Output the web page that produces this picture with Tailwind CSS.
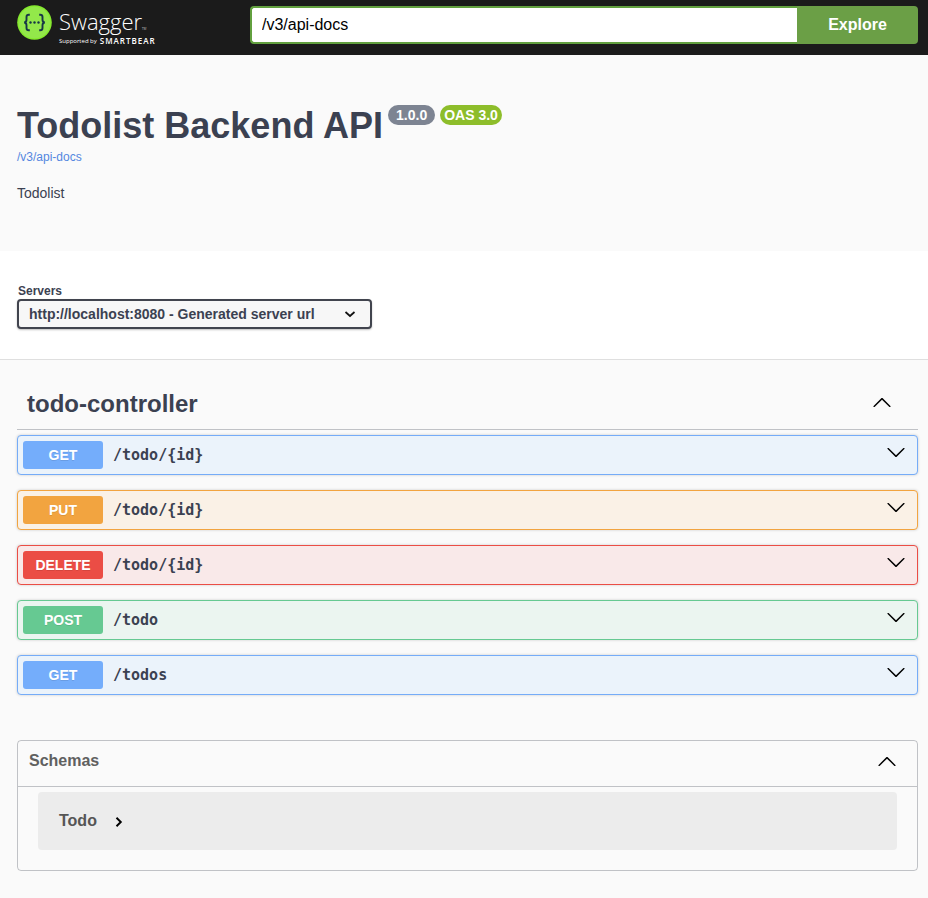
<!DOCTYPE html>
<html lang="en">
<head>
<meta charset="utf-8">
<meta name="viewport" content="width=device-width, initial-scale=1">
<title>Swagger UI</title>
<script src="https://cdn.jsdelivr.net/npm/@tailwindcss/browser@4"></script>
</head>
<body class="min-h-screen bg-[#fafafa] font-['Liberation_Sans',Arial,sans-serif] text-[#3b4151]">
<svg class="hidden" aria-hidden="true">
  <symbol id="chevron" viewBox="0 0 20 20"><path d="M17.418 6.109c.272-.268.709-.268.979 0s.271.701 0 .969l-7.908 7.830c-.27.268-.707.268-.979 0l-7.908-7.830c-.27-.268-.27-.701 0-.969.271-.268.709-.268.979 0L10 13.250z"/></symbol>
</svg>

<header class="flex h-[55px] items-start bg-[#1b1b1b] pt-[6px] pr-[10px] pl-[17px]">
  <a href="#" aria-label="Swagger, supported by SMARTBEAR" class="-mt-px flex w-[233px] shrink-0 gap-[7px] font-['Open_Sans',sans-serif] text-white">
    <svg class="h-[35px] w-[35px]" viewBox="0 0 35 35" aria-hidden="true">
      <circle cx="17.500" cy="17.500" r="17.300" fill="#85ea2d"/>
      <circle cx="17.500" cy="17.500" r="15.800" fill="#93e84a"/>
      <g fill="none" stroke="#173647" stroke-width="1.900">
        <path d="M12.800 9.800h-1c-1.500 0-2.300.8-2.300 2.300v2.700c0 1.600-.7 2.500-2.300 2.700 1.600.2 2.300 1.100 2.300 2.700v2.700c0 1.500.8 2.300 2.300 2.300h1"/>
        <path d="M22.200 9.800h1c1.500 0 2.300.8 2.300 2.300v2.700c0 1.600.7 2.500 2.300 2.700-1.600.2-2.300 1.100-2.300 2.700v2.700c0 1.500-.8 2.300-2.300 2.300h-1"/>
      </g>
      <g fill="#173647"><circle cx="13.500" cy="17.500" r="1.200"/><circle cx="17.500" cy="17.500" r="1.200"/><circle cx="21.500" cy="17.500" r="1.200"/></g>
    </svg>
    <span class="flex flex-col">
      <span class="flex items-end text-[22px] leading-[32px] font-light">Swagger<span class="text-[3px] leading-[16px]">TM</span></span>
      <span class="flex items-center gap-[3px] text-[6px] leading-[8px]">Supported by <b class="text-[8px] font-semibold tracking-[1px]">SMARTBEAR</b></span>
    </span>
  </a>
  <form class="flex min-w-0 flex-1" onsubmit="return false">
    <input type="text" aria-label="API definition URL" value="/v3/api-docs" class="h-[38px] min-w-0 flex-1 rounded-l-[4px] border-2 border-r-0 border-[#62a03f] bg-white px-[10px] text-[16px] text-black outline-none">
    <button type="submit" class="h-[38px] w-[121px] rounded-r-[4px] bg-[#6b9f46] text-[16px] font-bold text-white">Explore</button>
  </form>
</header>

<main>
  <section class="h-[196px] pt-[48px] pr-[10px] pl-[17px]">
    <div class="flex items-start gap-[5px]">
      <h1 class="text-[36px] leading-[46px] font-bold">Todolist Backend API</h1>
      <span class="mt-[2px] rounded-full bg-[#7d8492] px-[8px] text-[14px] leading-[20px] font-bold text-white">1.0.0</span>
      <span class="mt-[2px] rounded-full bg-[#8dbd2a] px-[4px] text-[14px] leading-[20px] font-bold text-white">OAS 3.0</span>
    </div>
    <a href="#" class="block text-[12px] leading-[16px] text-[#5487e0]">/v3/api-docs</a>
    <p class="mt-[19px] text-[14px] leading-[18px]">Todolist</p>
  </section>

  <section class="h-[109px] border-b border-[#dfdfdf] bg-white pt-[32px] pr-[10px] pl-[17px]">
    <label for="servers" class="block pl-px text-[12px] leading-[16px] font-bold">Servers</label>
    <div class="relative w-[355px] max-w-full">
      <select id="servers" class="block h-[30px] w-full appearance-none rounded-[4px] border-2 border-[#41444e] bg-[#f7f7f7] pl-[10px] text-[14px] font-bold shadow-[0_1px_2px_0_rgba(0,0,0,0.25)]">
        <option>http://localhost:8080 - Generated server url</option>
      </select>
      <svg class="pointer-events-none absolute top-[10px] right-[16px] h-[10px] w-[12px]" viewBox="0 0 12 10" fill="none" stroke="#111" stroke-width="1.700" aria-hidden="true"><path d="M1.500 3l4.500 4 4.500-4"/></svg>
    </div>
  </section>

  <section class="pt-[16px] pr-[10px] pl-[17px]">
    <h2 class="border-b border-[#3b4151]/30">
      <button type="button" aria-expanded="true" class="flex h-[53px] w-full items-center justify-between pr-[26px] pl-[10px] text-[24px] font-bold"><span class="pt-[2px]">todo-controller</span>
        <svg class="h-[20px] w-[20px] rotate-180 fill-black"><use href="#chevron"/></svg>
      </button>
    </h2>
    <div class="mt-[5px] flex flex-col gap-[15px]">
      <button type="button" class="flex h-[40px] w-full items-center rounded-[4px] border border-[#75acf8] bg-[#ebf3fb] pr-[11px] pl-[5px] shadow-[0_0_3px_rgba(0,0,0,0.19)]">
        <span class="w-[80px] rounded-[3px] bg-[#74adfb] text-center text-[14px] leading-[28px] font-bold text-white text-shadow-[0_1px_0_rgba(0,0,0,0.1)]">GET</span>
        <span class="flex-1 pt-px pl-[10px] text-left font-['DejaVu_Sans_Mono',monospace] text-[15px] font-bold">/todo/{id}</span>
        <svg class="mb-[7px] h-[20px] w-[20px] fill-black"><use href="#chevron"/></svg>
      </button>
      <button type="button" class="flex h-[40px] w-full items-center rounded-[4px] border border-[#f2a440] bg-[#faf1e6] pr-[11px] pl-[5px] shadow-[0_0_3px_rgba(0,0,0,0.19)]">
        <span class="w-[80px] rounded-[3px] bg-[#f2a440] text-center text-[14px] leading-[28px] font-bold text-white text-shadow-[0_1px_0_rgba(0,0,0,0.1)]">PUT</span>
        <span class="flex-1 pt-px pl-[10px] text-left font-['DejaVu_Sans_Mono',monospace] text-[15px] font-bold">/todo/{id}</span>
        <svg class="mb-[7px] h-[20px] w-[20px] fill-black"><use href="#chevron"/></svg>
      </button>
      <button type="button" class="flex h-[40px] w-full items-center rounded-[4px] border border-[#eb4d45] bg-[#f9e9e9] pr-[11px] pl-[5px] shadow-[0_0_3px_rgba(0,0,0,0.19)]">
        <span class="w-[80px] rounded-[3px] bg-[#eb4d45] text-center text-[14px] leading-[28px] font-bold text-white text-shadow-[0_1px_0_rgba(0,0,0,0.1)]">DELETE</span>
        <span class="flex-1 pt-px pl-[10px] text-left font-['DejaVu_Sans_Mono',monospace] text-[15px] font-bold">/todo/{id}</span>
        <svg class="mb-[7px] h-[20px] w-[20px] fill-black"><use href="#chevron"/></svg>
      </button>
      <button type="button" class="flex h-[40px] w-full items-center rounded-[4px] border border-[#66c992] bg-[#ebf5f0] pr-[11px] pl-[5px] shadow-[0_0_3px_rgba(0,0,0,0.19)]">
        <span class="w-[80px] rounded-[3px] bg-[#66c992] text-center text-[14px] leading-[28px] font-bold text-white text-shadow-[0_1px_0_rgba(0,0,0,0.1)]">POST</span>
        <span class="flex-1 pt-px pl-[10px] text-left font-['DejaVu_Sans_Mono',monospace] text-[15px] font-bold">/todo</span>
        <svg class="mb-[7px] h-[20px] w-[20px] fill-black"><use href="#chevron"/></svg>
      </button>
      <button type="button" class="flex h-[40px] w-full items-center rounded-[4px] border border-[#75acf8] bg-[#ebf3fb] pr-[11px] pl-[5px] shadow-[0_0_3px_rgba(0,0,0,0.19)]">
        <span class="w-[80px] rounded-[3px] bg-[#74adfb] text-center text-[14px] leading-[28px] font-bold text-white text-shadow-[0_1px_0_rgba(0,0,0,0.1)]">GET</span>
        <span class="flex-1 pt-px pl-[10px] text-left font-['DejaVu_Sans_Mono',monospace] text-[15px] font-bold">/todos</span>
        <svg class="mb-[7px] h-[20px] w-[20px] fill-black"><use href="#chevron"/></svg>
      </button>
    </div>
  </section>

  <section class="mt-[45px] mr-[10px] mb-[20px] ml-[17px] rounded-[4px] border border-[#3b4151]/30 text-[#606060]">
    <h2 class="border-b border-[#3b4151]/30">
      <button type="button" aria-expanded="true" class="flex h-[45px] w-full items-center justify-between pr-[20px] pl-[11px] text-[16px] font-bold"><span class="mb-[5px]">Schemas</span>
        <svg class="mb-[4px] h-[20px] w-[20px] rotate-180 fill-black"><use href="#chevron"/></svg>
      </button>
    </h2>
    <button type="button" class="mx-[20px] mt-[5px] mb-[20px] flex h-[58px] w-[calc(100%-40px)] items-center gap-[17px] rounded-[4px] bg-[#ececec] px-[21px] text-[16px] font-bold text-[#555]">Todo
      <svg class="mt-[2px] h-[12px] w-[10px]" viewBox="0 0 10 12" fill="none" stroke="#000" stroke-width="1.900" aria-hidden="true"><path d="M2.500 1.800L6.800 6l-4.300 4.200"/></svg>
    </button>
  </section>
</main>
</body>
</html>
